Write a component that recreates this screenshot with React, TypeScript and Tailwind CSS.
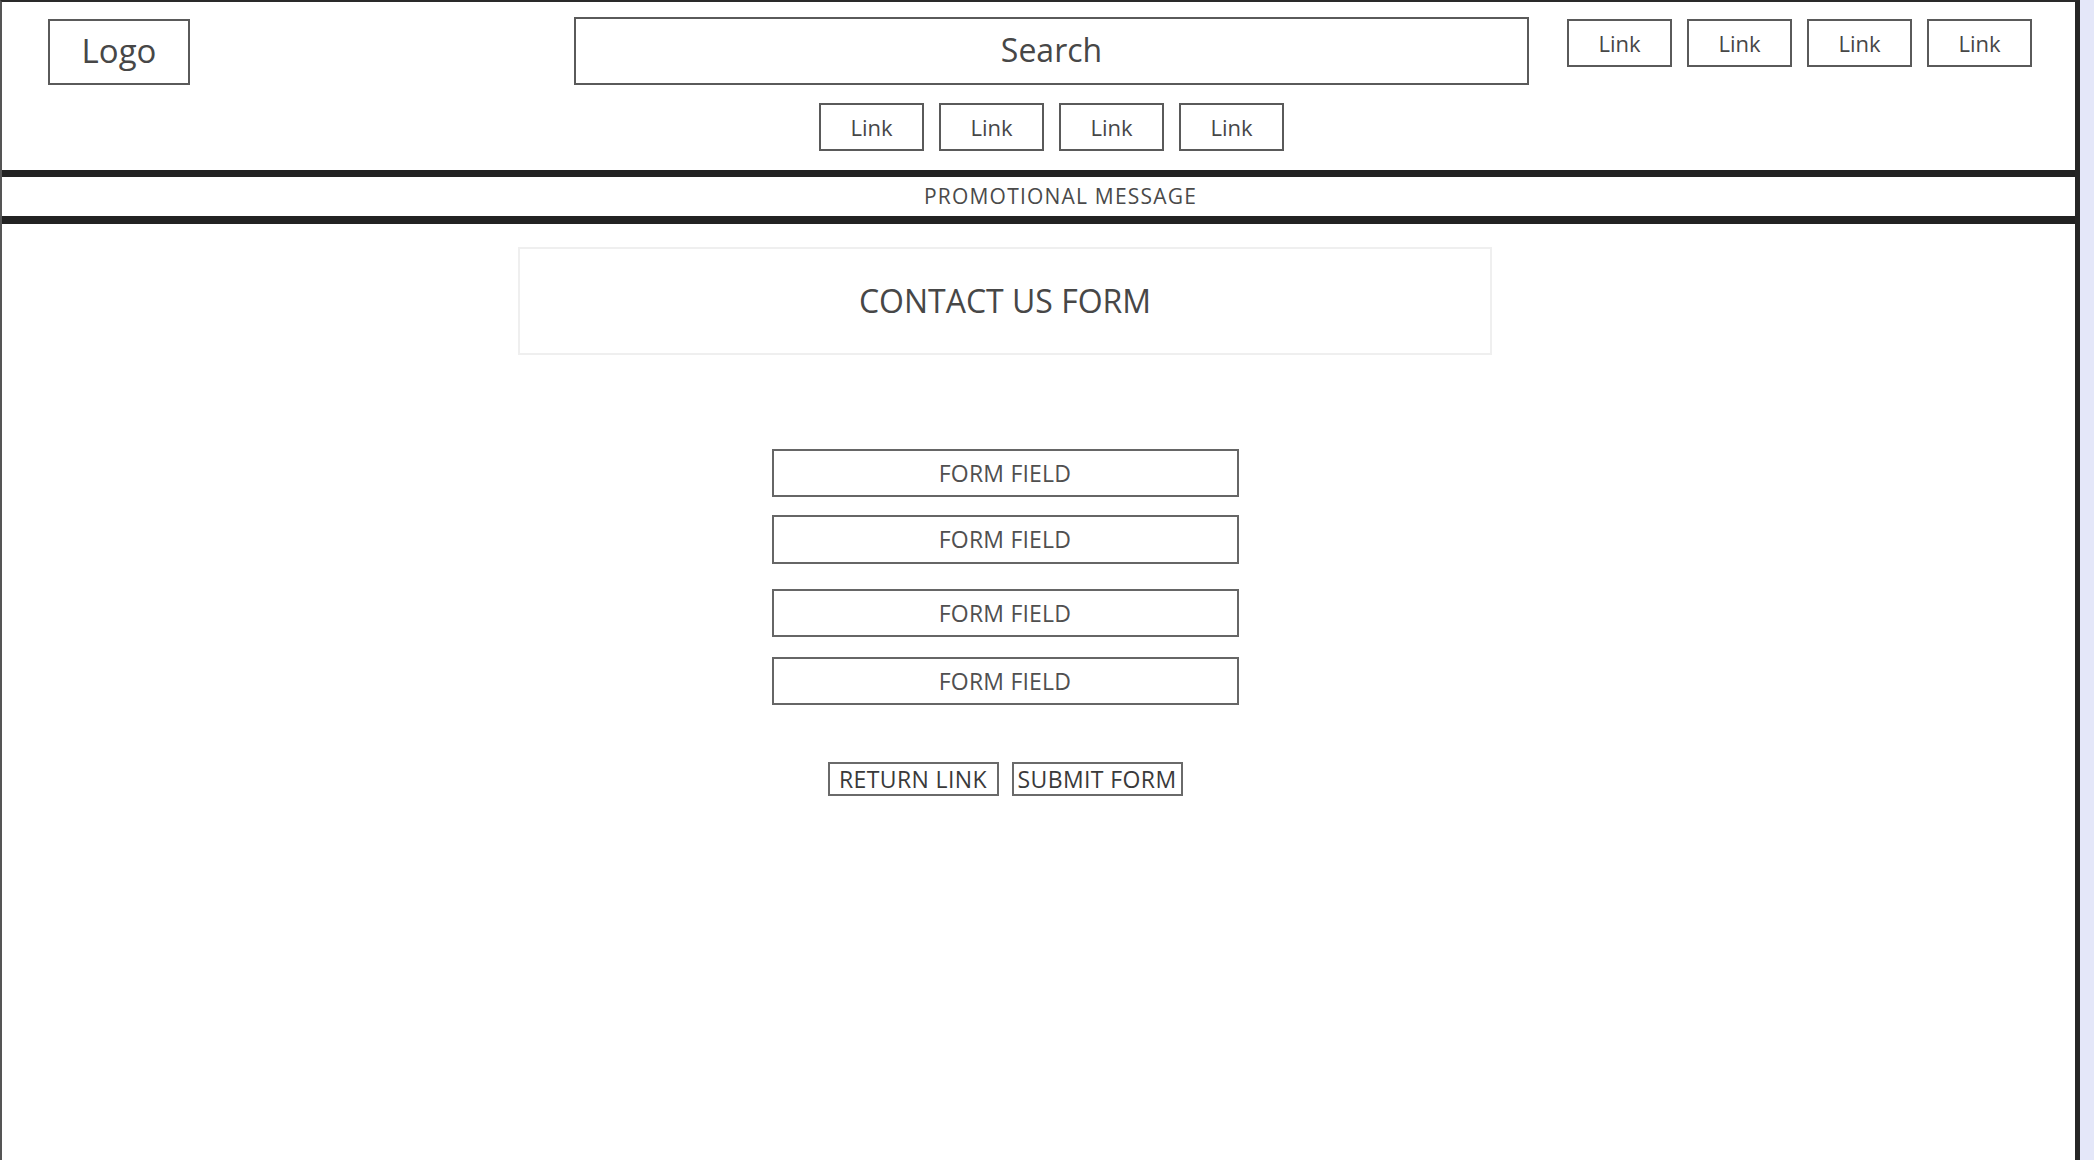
export default function App() {
  const topLinks = ["Link", "Link", "Link", "Link"]

  return (
    <div className="min-h-screen bg-[#e4e7f9] font-['Open_Sans',sans-serif] text-[#474747]">
      <div className="w-[2080px] h-[1160px] bg-white border-t-2 border-l-2 border-r-[5px] border-t-[#2a2a2a] border-l-[#555] border-r-[#262626] flex flex-col">
        {/* Header */}
        <header className="h-[168px] flex items-start pl-[46px]">
          <div className="mt-[17px] w-[142px] h-[66px] border-2 border-[#5a5a5a] flex items-center justify-center text-[33px] leading-none pb-[4px]">
            Logo
          </div>

          <div className="ml-[384px] mt-[15px] flex flex-col items-center">
            <div className="w-[955px] h-[68px] border-2 border-[#5a5a5a] flex items-center justify-center text-[32px] leading-none pb-[2px]">
              Search
            </div>
            <div className="mt-[18px] flex gap-[15px]">
              {topLinks.map((l, i) => (
                <div
                  key={i}
                  className="w-[105px] h-[48px] border-2 border-[#5a5a5a] flex items-center justify-center text-[22px] leading-none"
                >
                  {l}
                </div>
              ))}
            </div>
          </div>

          <div className="ml-[38px] mt-[17px] flex gap-[15px]">
            {topLinks.map((l, i) => (
              <div
                key={i}
                className="w-[105px] h-[48px] border-2 border-[#5a5a5a] flex items-center justify-center text-[22px] leading-none"
              >
                {l}
              </div>
            ))}
          </div>
        </header>

        <div className="h-[7px] bg-[#222]" />
        {/* Promo bar */}
        <div className="h-[39px] flex items-center justify-center pl-[44px] text-[21px] tracking-[1.2px] text-[#4a4a4a]">
          PROMOTIONAL MESSAGE
        </div>
        <div className="h-[8px] bg-[#222]" />

        {/* Main Content */}
        <main className="flex-1">
          <div className="ml-[516px] w-[974px] flex flex-col items-center">
            <div className="mt-[23px] w-[974px] h-[108px] border-2 border-[#efefef] flex items-center justify-center text-[32px] leading-none">
              CONTACT US FORM
            </div>

            <div className="mt-[94px] flex flex-col items-center text-[#505050]">
              <div className="w-[467px] h-[48px] border-2 border-[#666] flex items-center justify-center text-[23px] tracking-[0.2px] leading-none">
                FORM FIELD
              </div>
              <div className="mt-[18px] w-[467px] h-[49px] border-2 border-[#666] flex items-center justify-center text-[23px] tracking-[0.2px] leading-none">
                FORM FIELD
              </div>
              <div className="mt-[25px] w-[467px] h-[48px] border-2 border-[#666] flex items-center justify-center text-[23px] tracking-[0.2px] leading-none">
                FORM FIELD
              </div>
              <div className="mt-[20px] w-[467px] h-[48px] border-2 border-[#666] flex items-center justify-center text-[23px] tracking-[0.2px] leading-none">
                FORM FIELD
              </div>
            </div>

            <div className="mt-[57px] flex gap-[13px]">
              <button className="w-[171px] h-[34px] border-2 border-[#6a6a6a] flex items-center justify-center text-[23px] tracking-[0.4px] leading-none text-[#3a3a3a]">
                RETURN LINK
              </button>
              <button className="w-[171px] h-[34px] border-2 border-[#6a6a6a] flex items-center justify-center text-[23px] tracking-[0.4px] leading-none text-[#3a3a3a]">
                SUBMIT FORM
              </button>
            </div>
          </div>
        </main>
      </div>
    </div>
  )
}
